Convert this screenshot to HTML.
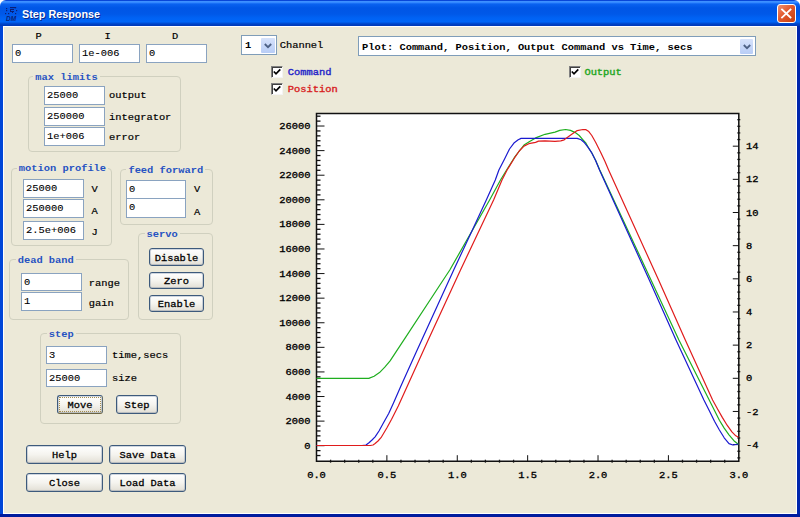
<!DOCTYPE html>
<html><head><meta charset="utf-8"><style>
*{box-sizing:border-box}
html,body{margin:0;padding:0;width:800px;height:517px;overflow:hidden;background:#fff}
body{position:relative;font-family:"Liberation Mono",monospace;font-weight:bold;font-size:10.4px;color:#000}
.a{position:absolute}
#title{left:0;top:0;width:800px;height:26px;border-radius:6px 6px 0 0;
 background:linear-gradient(#0846d8 0,#0846d8 1px,#3d90ff 1.5px,#3388ff 2.5px,#0a62f0 4px,#0056e6 8px,#0058e8 14px,#0062f4 18px,#0066f8 22px,#0050d8 23px,#003cbc 25px,#003cbc 26px)}
#frameL{left:0;top:26px;width:3px;height:491px;background:#0046d8}
#frameR{left:797px;top:26px;width:3px;height:491px;background:#0026ac}
#frameB{left:0;top:514px;width:800px;height:3px;background:#001c9e}
#client{left:3px;top:26px;width:794px;height:488px;background:#ece9d8;border:1px solid #fff}
#ttl{left:22px;top:8px;font-family:"Liberation Sans",sans-serif;font-weight:bold;font-size:10.8px;line-height:13px;color:#fff;text-shadow:1px 1px 0 #0a2a8a}
#close{left:777px;top:4px;width:19px;height:19px;border:1px solid #fff;border-radius:3px;background:linear-gradient(135deg,#f09070,#e25a2e 45%,#c8400e)}
.edit{position:absolute;background:#fff;border:1px solid #8aa3c0;padding-left:2px;font-weight:normal;color:#000;-webkit-text-stroke-width:0.1px;line-height:18px;white-space:pre}
.grp{position:absolute;border:1px solid #d0d0bf;border-radius:4px}
.gt{position:absolute;color:#2652c2;background:#ece9d8;padding:0 2px;line-height:12px;white-space:pre}
.lbl{position:absolute;white-space:pre;line-height:12px;font-weight:normal;-webkit-text-stroke-width:0.2px}
.btn{position:absolute;font-weight:normal;-webkit-text-stroke-width:0.3px;border:1px solid #3d5a7c;box-shadow:inset 0 0 0 1px rgba(120,140,165,.35);border-radius:3px;background:linear-gradient(#ffffff,#f5f4ef 50%,#e6e3da 90%,#d8d3c8);text-align:center;white-space:pre}
.cb{position:absolute;width:12px;height:12px;background:#fff;border-top:1px solid #808080;border-left:1px solid #808080;border-right:1px solid #f4f4f4;border-bottom:1px solid #f4f4f4;box-shadow:inset 1px 1px 0 #404040}
.combo{position:absolute;background:#fff;border:1px solid #7f9db9;white-space:pre;padding-left:3px}
.t{display:inline-block;transform:scaleY(.87);line-height:12px}
.cl{font-weight:normal;-webkit-text-stroke-width:0.35px}
.dd{position:absolute;background:linear-gradient(#d6e2fb,#b8cdf6);border-radius:1px}
</style></head><body>
<div id="title" class="a"></div>
<div id="frameL" class="a"></div><div id="frameR" class="a"></div><div id="frameB" class="a"></div>
<div id="client" class="a"></div>
<div id="ttl" class="a">Step Response</div>
<svg class="a" style="left:0;top:0" width="22" height="24"><g fill="#0a1f78">
<rect x="10" y="7" width="6" height="1.2"/><rect x="10" y="9" width="1" height="3"/><rect x="11" y="9" width="3" height="1"/><rect x="11" y="11" width="3" height="1"/>
<rect x="6" y="8" width="1.2" height="1.2"/><rect x="6" y="10" width="1.2" height="1.2"/><rect x="5" y="13" width="1.2" height="1.2"/><rect x="8" y="13" width="1.2" height="1.2"/>
<rect x="15" y="7" width="1.2" height="1.2"/><rect x="16" y="10" width="1.2" height="1.2"/><rect x="15" y="13" width="1.2" height="1.2"/><rect x="12" y="12" width="1" height="1"/>
</g><text x="6" y="20.5" font-family="Liberation Sans" font-weight="bold" font-style="italic" font-size="6.5" fill="#0a1f78">DM</text></svg>
<div id="close" class="a"></div><svg class="a" style="left:777px;top:4px" width="19" height="19"><path d="M5 5.5L13.5 13.5M13.5 5.5L5 13.5" stroke="#fff" stroke-width="1.8" stroke-linecap="square"/></svg>
<div class="lbl" style="left:8.5px;width:60px;text-align:center;top:30px"><span class="t">P</span></div>
<div class="lbl" style="left:77.6px;width:60px;text-align:center;top:30px"><span class="t">I</span></div>
<div class="lbl" style="left:145px;width:60px;text-align:center;top:30px"><span class="t">D</span></div>
<div class="edit" style="left:12px;top:44px;width:61px;height:19px;line-height:12px;padding-top:2px"><span class="t">0</span></div>
<div class="edit" style="left:79px;top:44px;width:61px;height:19px;line-height:12px;padding-top:2px"><span class="t">1e-006</span></div>
<div class="edit" style="left:146px;top:44px;width:61px;height:19px;line-height:12px;padding-top:2px"><span class="t">0</span></div>
<div class="grp" style="left:28px;top:76px;width:153px;height:76px"></div>
<div class="gt" style="left:33.3px;top:70.5px"><span class="t">max limits</span></div>
<div class="edit" style="left:44px;top:86px;width:61px;height:19px;line-height:12px;padding-top:2px"><span class="t">25000</span></div>
<div class="edit" style="left:44px;top:107px;width:61px;height:19px;line-height:12px;padding-top:2px"><span class="t">250000</span></div>
<div class="edit" style="left:44px;top:127px;width:61px;height:19px;line-height:12px;padding-top:2px"><span class="t">1e+006</span></div>
<div class="lbl" style="left:109px;top:89.4px"><span class="t">output</span></div>
<div class="lbl" style="left:109px;top:111px"><span class="t">integrator</span></div>
<div class="lbl" style="left:109px;top:131.2px"><span class="t">error</span></div>
<div class="grp" style="left:11px;top:168px;width:101px;height:78px"></div>
<div class="gt" style="left:16.8px;top:162px"><span class="t">motion profile</span></div>
<div class="edit" style="left:23px;top:179px;width:61px;height:19px;line-height:12px;padding-top:2px"><span class="t">25000</span></div>
<div class="edit" style="left:23px;top:199px;width:61px;height:19px;line-height:12px;padding-top:2px"><span class="t">250000</span></div>
<div class="edit" style="left:23px;top:221px;width:61px;height:19px;line-height:12px;padding-top:2px"><span class="t">2.5e+006</span></div>
<div class="lbl" style="left:91.4px;top:182.6px"><span class="t">V</span></div>
<div class="lbl" style="left:91.4px;top:205px"><span class="t">A</span></div>
<div class="lbl" style="left:91.4px;top:226px"><span class="t">J</span></div>
<div class="grp" style="left:120px;top:169px;width:93px;height:56px"></div>
<div class="gt" style="left:126.4px;top:164px"><span class="t">feed forward</span></div>
<div class="edit" style="left:126px;top:180px;width:60px;height:19px;line-height:12px;padding-top:2px"><span class="t">0</span></div>
<div class="edit" style="left:126px;top:198px;width:60px;height:20px;line-height:12px;padding-top:2px"><span class="t">0</span></div>
<div class="lbl" style="left:194px;top:182.6px"><span class="t">V</span></div>
<div class="lbl" style="left:194px;top:206px"><span class="t">A</span></div>
<div class="grp" style="left:138px;top:233px;width:75px;height:87px"></div>
<div class="gt" style="left:144.5px;top:227.8px"><span class="t">servo</span></div>
<div class="btn" style="left:149px;top:248px;width:55px;height:18px;line-height:18px;"><span class="t">Disable</span></div>
<div class="btn" style="left:149px;top:272px;width:55px;height:17px;line-height:17px;"><span class="t">Zero</span></div>
<div class="btn" style="left:149px;top:295px;width:55px;height:17px;line-height:17px;"><span class="t">Enable</span></div>
<div class="grp" style="left:9px;top:259px;width:120px;height:61px"></div>
<div class="gt" style="left:15.7px;top:253.5px"><span class="t">dead band</span></div>
<div class="edit" style="left:21px;top:273px;width:61px;height:18px;line-height:12px;padding-top:2px"><span class="t">0</span></div>
<div class="edit" style="left:21px;top:292px;width:61px;height:19px;line-height:12px;padding-top:2px"><span class="t">1</span></div>
<div class="lbl" style="left:88.7px;top:276.7px"><span class="t">range</span></div>
<div class="lbl" style="left:88.7px;top:296.7px"><span class="t">gain</span></div>
<div class="grp" style="left:40px;top:333px;width:141px;height:91px"></div>
<div class="gt" style="left:46.7px;top:328px"><span class="t">step</span></div>
<div class="edit" style="left:46px;top:346px;width:61px;height:18px;line-height:12px;padding-top:2px"><span class="t">3</span></div>
<div class="edit" style="left:46px;top:369px;width:61px;height:18px;line-height:12px;padding-top:2px"><span class="t">25000</span></div>
<div class="lbl" style="left:112px;top:349px"><span class="t">time,secs</span></div>
<div class="lbl" style="left:112px;top:372px"><span class="t">size</span></div>
<div class="btn" style="left:57px;top:395px;width:46px;height:19px;line-height:19px;border-bottom-color:#6b6440;border-right-color:#5d6a6a"><span class="t">Move</span></div>
<div class="a" style="left:59px;top:397px;width:42px;height:15px;border:1px dotted #a58d4e"></div>
<div class="btn" style="left:116px;top:395px;width:42px;height:19px;line-height:19px;"><span class="t">Step</span></div>
<div class="btn" style="left:26px;top:445px;width:77px;height:19px;line-height:19px;"><span class="t">Help</span></div>
<div class="btn" style="left:109px;top:445px;width:77px;height:19px;line-height:19px;"><span class="t">Save Data</span></div>
<div class="btn" style="left:26px;top:473px;width:77px;height:19px;line-height:19px;"><span class="t">Close</span></div>
<div class="btn" style="left:109px;top:473px;width:77px;height:19px;line-height:19px;"><span class="t">Load Data</span></div>
<div class="combo" style="left:241px;top:35px;width:36px;height:20px;line-height:19px"><span class="t">1</span></div>
<div class="dd" style="left:261px;top:37.8px;width:13.5px;height:15px"></div>
<svg class="a" style="left:261px;top:37.8px" width="14" height="15"><path d="M3.8 6L7 9.2L10.2 6" fill="none" stroke="#4d6185" stroke-width="1.8"/></svg>
<div class="lbl" style="left:279.7px;top:39.2px"><span class="t">Channel</span></div>
<div class="combo" style="left:358px;top:36px;width:398px;height:20px;line-height:20px"><span class="t">Plot: Command, Position, Output Command vs Time, secs</span></div>
<div class="dd" style="left:740px;top:39px;width:13px;height:15px"></div>
<svg class="a" style="left:740px;top:39px" width="14" height="15"><path d="M3.8 6L7 9.2L10.2 6" fill="none" stroke="#4d6185" stroke-width="1.8"/></svg>
<div class="cb" style="left:271px;top:66px"></div>
<svg class="a" style="left:271px;top:66px" width="12" height="12"><path d="M2.8 5.5L5 7.8L9.3 3.3" fill="none" stroke="#000" stroke-width="1.7"/></svg>
<div class="lbl" style="left:287.8px;top:65.7px;color:#2525c8;-webkit-text-stroke-width:0.4px"><span class="t">Command</span></div>
<div class="cb" style="left:271px;top:83px"></div>
<svg class="a" style="left:271px;top:83px" width="12" height="12"><path d="M2.8 5.5L5 7.8L9.3 3.3" fill="none" stroke="#000" stroke-width="1.7"/></svg>
<div class="lbl" style="left:287.8px;top:82.7px;color:#d82222;-webkit-text-stroke-width:0.4px"><span class="t">Position</span></div>
<div class="cb" style="left:568.5px;top:66px"></div>
<svg class="a" style="left:568.5px;top:66px" width="12" height="12"><path d="M2.8 5.5L5 7.8L9.3 3.3" fill="none" stroke="#000" stroke-width="1.7"/></svg>
<div class="lbl" style="left:584.4px;top:65.7px;color:#22a622;-webkit-text-stroke-width:0.4px"><span class="t">Output</span></div>
<svg class="a" style="left:0;top:0" width="800" height="517"><rect x="316.5" y="113.5" width="422.29999999999995" height="347.7" fill="#fff"/><line x1="316.5" y1="455.54" x2="320.5" y2="455.54" stroke="#111" stroke-width="1.3"/><line x1="316.5" y1="450.62" x2="320.5" y2="450.62" stroke="#111" stroke-width="1.3"/><line x1="316.5" y1="445.70" x2="324.5" y2="445.70" stroke="#111" stroke-width="1"/><line x1="316.5" y1="440.78" x2="320.5" y2="440.78" stroke="#111" stroke-width="1.3"/><line x1="316.5" y1="435.86" x2="320.5" y2="435.86" stroke="#111" stroke-width="1.3"/><line x1="316.5" y1="430.95" x2="320.5" y2="430.95" stroke="#111" stroke-width="1.3"/><line x1="316.5" y1="426.03" x2="320.5" y2="426.03" stroke="#111" stroke-width="1.3"/><line x1="316.5" y1="421.11" x2="324.5" y2="421.11" stroke="#111" stroke-width="1"/><line x1="316.5" y1="416.19" x2="320.5" y2="416.19" stroke="#111" stroke-width="1.3"/><line x1="316.5" y1="411.27" x2="320.5" y2="411.27" stroke="#111" stroke-width="1.3"/><line x1="316.5" y1="406.36" x2="320.5" y2="406.36" stroke="#111" stroke-width="1.3"/><line x1="316.5" y1="401.44" x2="320.5" y2="401.44" stroke="#111" stroke-width="1.3"/><line x1="316.5" y1="396.52" x2="324.5" y2="396.52" stroke="#111" stroke-width="1"/><line x1="316.5" y1="391.60" x2="320.5" y2="391.60" stroke="#111" stroke-width="1.3"/><line x1="316.5" y1="386.68" x2="320.5" y2="386.68" stroke="#111" stroke-width="1.3"/><line x1="316.5" y1="381.77" x2="320.5" y2="381.77" stroke="#111" stroke-width="1.3"/><line x1="316.5" y1="376.85" x2="320.5" y2="376.85" stroke="#111" stroke-width="1.3"/><line x1="316.5" y1="371.93" x2="324.5" y2="371.93" stroke="#111" stroke-width="1"/><line x1="316.5" y1="367.01" x2="320.5" y2="367.01" stroke="#111" stroke-width="1.3"/><line x1="316.5" y1="362.09" x2="320.5" y2="362.09" stroke="#111" stroke-width="1.3"/><line x1="316.5" y1="357.18" x2="320.5" y2="357.18" stroke="#111" stroke-width="1.3"/><line x1="316.5" y1="352.26" x2="320.5" y2="352.26" stroke="#111" stroke-width="1.3"/><line x1="316.5" y1="347.34" x2="324.5" y2="347.34" stroke="#111" stroke-width="1"/><line x1="316.5" y1="342.42" x2="320.5" y2="342.42" stroke="#111" stroke-width="1.3"/><line x1="316.5" y1="337.50" x2="320.5" y2="337.50" stroke="#111" stroke-width="1.3"/><line x1="316.5" y1="332.59" x2="320.5" y2="332.59" stroke="#111" stroke-width="1.3"/><line x1="316.5" y1="327.67" x2="320.5" y2="327.67" stroke="#111" stroke-width="1.3"/><line x1="316.5" y1="322.75" x2="324.5" y2="322.75" stroke="#111" stroke-width="1"/><line x1="316.5" y1="317.83" x2="320.5" y2="317.83" stroke="#111" stroke-width="1.3"/><line x1="316.5" y1="312.91" x2="320.5" y2="312.91" stroke="#111" stroke-width="1.3"/><line x1="316.5" y1="308.00" x2="320.5" y2="308.00" stroke="#111" stroke-width="1.3"/><line x1="316.5" y1="303.08" x2="320.5" y2="303.08" stroke="#111" stroke-width="1.3"/><line x1="316.5" y1="298.16" x2="324.5" y2="298.16" stroke="#111" stroke-width="1"/><line x1="316.5" y1="293.24" x2="320.5" y2="293.24" stroke="#111" stroke-width="1.3"/><line x1="316.5" y1="288.32" x2="320.5" y2="288.32" stroke="#111" stroke-width="1.3"/><line x1="316.5" y1="283.41" x2="320.5" y2="283.41" stroke="#111" stroke-width="1.3"/><line x1="316.5" y1="278.49" x2="320.5" y2="278.49" stroke="#111" stroke-width="1.3"/><line x1="316.5" y1="273.57" x2="324.5" y2="273.57" stroke="#111" stroke-width="1"/><line x1="316.5" y1="268.65" x2="320.5" y2="268.65" stroke="#111" stroke-width="1.3"/><line x1="316.5" y1="263.73" x2="320.5" y2="263.73" stroke="#111" stroke-width="1.3"/><line x1="316.5" y1="258.82" x2="320.5" y2="258.82" stroke="#111" stroke-width="1.3"/><line x1="316.5" y1="253.90" x2="320.5" y2="253.90" stroke="#111" stroke-width="1.3"/><line x1="316.5" y1="248.98" x2="324.5" y2="248.98" stroke="#111" stroke-width="1"/><line x1="316.5" y1="244.06" x2="320.5" y2="244.06" stroke="#111" stroke-width="1.3"/><line x1="316.5" y1="239.14" x2="320.5" y2="239.14" stroke="#111" stroke-width="1.3"/><line x1="316.5" y1="234.23" x2="320.5" y2="234.23" stroke="#111" stroke-width="1.3"/><line x1="316.5" y1="229.31" x2="320.5" y2="229.31" stroke="#111" stroke-width="1.3"/><line x1="316.5" y1="224.39" x2="324.5" y2="224.39" stroke="#111" stroke-width="1"/><line x1="316.5" y1="219.47" x2="320.5" y2="219.47" stroke="#111" stroke-width="1.3"/><line x1="316.5" y1="214.55" x2="320.5" y2="214.55" stroke="#111" stroke-width="1.3"/><line x1="316.5" y1="209.64" x2="320.5" y2="209.64" stroke="#111" stroke-width="1.3"/><line x1="316.5" y1="204.72" x2="320.5" y2="204.72" stroke="#111" stroke-width="1.3"/><line x1="316.5" y1="199.80" x2="324.5" y2="199.80" stroke="#111" stroke-width="1"/><line x1="316.5" y1="194.88" x2="320.5" y2="194.88" stroke="#111" stroke-width="1.3"/><line x1="316.5" y1="189.96" x2="320.5" y2="189.96" stroke="#111" stroke-width="1.3"/><line x1="316.5" y1="185.05" x2="320.5" y2="185.05" stroke="#111" stroke-width="1.3"/><line x1="316.5" y1="180.13" x2="320.5" y2="180.13" stroke="#111" stroke-width="1.3"/><line x1="316.5" y1="175.21" x2="324.5" y2="175.21" stroke="#111" stroke-width="1"/><line x1="316.5" y1="170.29" x2="320.5" y2="170.29" stroke="#111" stroke-width="1.3"/><line x1="316.5" y1="165.37" x2="320.5" y2="165.37" stroke="#111" stroke-width="1.3"/><line x1="316.5" y1="160.46" x2="320.5" y2="160.46" stroke="#111" stroke-width="1.3"/><line x1="316.5" y1="155.54" x2="320.5" y2="155.54" stroke="#111" stroke-width="1.3"/><line x1="316.5" y1="150.62" x2="324.5" y2="150.62" stroke="#111" stroke-width="1"/><line x1="316.5" y1="145.70" x2="320.5" y2="145.70" stroke="#111" stroke-width="1.3"/><line x1="316.5" y1="140.78" x2="320.5" y2="140.78" stroke="#111" stroke-width="1.3"/><line x1="316.5" y1="135.87" x2="320.5" y2="135.87" stroke="#111" stroke-width="1.3"/><line x1="316.5" y1="130.95" x2="320.5" y2="130.95" stroke="#111" stroke-width="1.3"/><line x1="316.5" y1="126.03" x2="324.5" y2="126.03" stroke="#111" stroke-width="1"/><line x1="316.5" y1="121.11" x2="320.5" y2="121.11" stroke="#111" stroke-width="1.3"/><line x1="316.5" y1="116.19" x2="320.5" y2="116.19" stroke="#111" stroke-width="1.3"/><line x1="737.3" y1="457.88" x2="740.3" y2="457.88" stroke="#222" stroke-width="1.3"/><line x1="737.3" y1="451.25" x2="740.3" y2="451.25" stroke="#222" stroke-width="1.3"/><line x1="732.8" y1="444.62" x2="738.8" y2="444.62" stroke="#111" stroke-width="1"/><line x1="737.3" y1="437.99" x2="740.3" y2="437.99" stroke="#222" stroke-width="1.3"/><line x1="737.3" y1="431.36" x2="740.3" y2="431.36" stroke="#222" stroke-width="1.3"/><line x1="737.3" y1="424.72" x2="740.3" y2="424.72" stroke="#222" stroke-width="1.3"/><line x1="737.3" y1="418.09" x2="740.3" y2="418.09" stroke="#222" stroke-width="1.3"/><line x1="732.8" y1="411.46" x2="738.8" y2="411.46" stroke="#111" stroke-width="1"/><line x1="737.3" y1="404.83" x2="740.3" y2="404.83" stroke="#222" stroke-width="1.3"/><line x1="737.3" y1="398.20" x2="740.3" y2="398.20" stroke="#222" stroke-width="1.3"/><line x1="737.3" y1="391.56" x2="740.3" y2="391.56" stroke="#222" stroke-width="1.3"/><line x1="737.3" y1="384.93" x2="740.3" y2="384.93" stroke="#222" stroke-width="1.3"/><line x1="732.8" y1="378.30" x2="738.8" y2="378.30" stroke="#111" stroke-width="1"/><line x1="737.3" y1="371.67" x2="740.3" y2="371.67" stroke="#222" stroke-width="1.3"/><line x1="737.3" y1="365.04" x2="740.3" y2="365.04" stroke="#222" stroke-width="1.3"/><line x1="737.3" y1="358.40" x2="740.3" y2="358.40" stroke="#222" stroke-width="1.3"/><line x1="737.3" y1="351.77" x2="740.3" y2="351.77" stroke="#222" stroke-width="1.3"/><line x1="732.8" y1="345.14" x2="738.8" y2="345.14" stroke="#111" stroke-width="1"/><line x1="737.3" y1="338.51" x2="740.3" y2="338.51" stroke="#222" stroke-width="1.3"/><line x1="737.3" y1="331.88" x2="740.3" y2="331.88" stroke="#222" stroke-width="1.3"/><line x1="737.3" y1="325.24" x2="740.3" y2="325.24" stroke="#222" stroke-width="1.3"/><line x1="737.3" y1="318.61" x2="740.3" y2="318.61" stroke="#222" stroke-width="1.3"/><line x1="732.8" y1="311.98" x2="738.8" y2="311.98" stroke="#111" stroke-width="1"/><line x1="737.3" y1="305.35" x2="740.3" y2="305.35" stroke="#222" stroke-width="1.3"/><line x1="737.3" y1="298.72" x2="740.3" y2="298.72" stroke="#222" stroke-width="1.3"/><line x1="737.3" y1="292.08" x2="740.3" y2="292.08" stroke="#222" stroke-width="1.3"/><line x1="737.3" y1="285.45" x2="740.3" y2="285.45" stroke="#222" stroke-width="1.3"/><line x1="732.8" y1="278.82" x2="738.8" y2="278.82" stroke="#111" stroke-width="1"/><line x1="737.3" y1="272.19" x2="740.3" y2="272.19" stroke="#222" stroke-width="1.3"/><line x1="737.3" y1="265.56" x2="740.3" y2="265.56" stroke="#222" stroke-width="1.3"/><line x1="737.3" y1="258.92" x2="740.3" y2="258.92" stroke="#222" stroke-width="1.3"/><line x1="737.3" y1="252.29" x2="740.3" y2="252.29" stroke="#222" stroke-width="1.3"/><line x1="732.8" y1="245.66" x2="738.8" y2="245.66" stroke="#111" stroke-width="1"/><line x1="737.3" y1="239.03" x2="740.3" y2="239.03" stroke="#222" stroke-width="1.3"/><line x1="737.3" y1="232.40" x2="740.3" y2="232.40" stroke="#222" stroke-width="1.3"/><line x1="737.3" y1="225.76" x2="740.3" y2="225.76" stroke="#222" stroke-width="1.3"/><line x1="737.3" y1="219.13" x2="740.3" y2="219.13" stroke="#222" stroke-width="1.3"/><line x1="732.8" y1="212.50" x2="738.8" y2="212.50" stroke="#111" stroke-width="1"/><line x1="737.3" y1="205.87" x2="740.3" y2="205.87" stroke="#222" stroke-width="1.3"/><line x1="737.3" y1="199.24" x2="740.3" y2="199.24" stroke="#222" stroke-width="1.3"/><line x1="737.3" y1="192.60" x2="740.3" y2="192.60" stroke="#222" stroke-width="1.3"/><line x1="737.3" y1="185.97" x2="740.3" y2="185.97" stroke="#222" stroke-width="1.3"/><line x1="732.8" y1="179.34" x2="738.8" y2="179.34" stroke="#111" stroke-width="1"/><line x1="737.3" y1="172.71" x2="740.3" y2="172.71" stroke="#222" stroke-width="1.3"/><line x1="737.3" y1="166.08" x2="740.3" y2="166.08" stroke="#222" stroke-width="1.3"/><line x1="737.3" y1="159.44" x2="740.3" y2="159.44" stroke="#222" stroke-width="1.3"/><line x1="737.3" y1="152.81" x2="740.3" y2="152.81" stroke="#222" stroke-width="1.3"/><line x1="732.8" y1="146.18" x2="738.8" y2="146.18" stroke="#111" stroke-width="1"/><line x1="737.3" y1="139.55" x2="740.3" y2="139.55" stroke="#222" stroke-width="1.3"/><line x1="737.3" y1="132.92" x2="740.3" y2="132.92" stroke="#222" stroke-width="1.3"/><line x1="737.3" y1="126.28" x2="740.3" y2="126.28" stroke="#222" stroke-width="1.3"/><line x1="737.3" y1="119.65" x2="740.3" y2="119.65" stroke="#222" stroke-width="1.3"/><line x1="330.58" y1="459.7" x2="330.58" y2="462.7" stroke="#222" stroke-width="1.3"/><line x1="344.65" y1="459.7" x2="344.65" y2="462.7" stroke="#222" stroke-width="1.3"/><line x1="358.73" y1="459.7" x2="358.73" y2="462.7" stroke="#222" stroke-width="1.3"/><line x1="372.81" y1="459.7" x2="372.81" y2="462.7" stroke="#222" stroke-width="1.3"/><line x1="386.88" y1="461.2" x2="386.88" y2="455.2" stroke="#111" stroke-width="1"/><line x1="400.96" y1="459.7" x2="400.96" y2="462.7" stroke="#222" stroke-width="1.3"/><line x1="415.04" y1="459.7" x2="415.04" y2="462.7" stroke="#222" stroke-width="1.3"/><line x1="429.11" y1="459.7" x2="429.11" y2="462.7" stroke="#222" stroke-width="1.3"/><line x1="443.19" y1="459.7" x2="443.19" y2="462.7" stroke="#222" stroke-width="1.3"/><line x1="457.27" y1="461.2" x2="457.27" y2="455.2" stroke="#111" stroke-width="1"/><line x1="471.34" y1="459.7" x2="471.34" y2="462.7" stroke="#222" stroke-width="1.3"/><line x1="485.42" y1="459.7" x2="485.42" y2="462.7" stroke="#222" stroke-width="1.3"/><line x1="499.50" y1="459.7" x2="499.50" y2="462.7" stroke="#222" stroke-width="1.3"/><line x1="513.57" y1="459.7" x2="513.57" y2="462.7" stroke="#222" stroke-width="1.3"/><line x1="527.65" y1="461.2" x2="527.65" y2="455.2" stroke="#111" stroke-width="1"/><line x1="541.73" y1="459.7" x2="541.73" y2="462.7" stroke="#222" stroke-width="1.3"/><line x1="555.80" y1="459.7" x2="555.80" y2="462.7" stroke="#222" stroke-width="1.3"/><line x1="569.88" y1="459.7" x2="569.88" y2="462.7" stroke="#222" stroke-width="1.3"/><line x1="583.96" y1="459.7" x2="583.96" y2="462.7" stroke="#222" stroke-width="1.3"/><line x1="598.03" y1="461.2" x2="598.03" y2="455.2" stroke="#111" stroke-width="1"/><line x1="612.11" y1="459.7" x2="612.11" y2="462.7" stroke="#222" stroke-width="1.3"/><line x1="626.19" y1="459.7" x2="626.19" y2="462.7" stroke="#222" stroke-width="1.3"/><line x1="640.26" y1="459.7" x2="640.26" y2="462.7" stroke="#222" stroke-width="1.3"/><line x1="654.34" y1="459.7" x2="654.34" y2="462.7" stroke="#222" stroke-width="1.3"/><line x1="668.42" y1="461.2" x2="668.42" y2="455.2" stroke="#111" stroke-width="1"/><line x1="682.49" y1="459.7" x2="682.49" y2="462.7" stroke="#222" stroke-width="1.3"/><line x1="696.57" y1="459.7" x2="696.57" y2="462.7" stroke="#222" stroke-width="1.3"/><line x1="710.65" y1="459.7" x2="710.65" y2="462.7" stroke="#222" stroke-width="1.3"/><line x1="724.72" y1="459.7" x2="724.72" y2="462.7" stroke="#222" stroke-width="1.3"/><path d="M316.5 113.5H738.8V461.2H316.5Z" fill="none" stroke="#111" stroke-width="1.5"/><path d="M316.5 378.4 L368.8 378.4 L374.1 376.3 L379.5 372.6 L384.8 367.2 L390.1 360.9 L394.7 353.9 L400.3 345.4 L405.9 336.9 L443.2 280.0 L449.8 270.0 L489.6 200.0 L500.5 180.0 L506.6 170.0 L514.3 157.7 L520.1 150.0 L524.0 145.1 L528.8 142.0 L535.6 137.9 L545.0 134.3 L555.0 132.1 L559.8 130.4 L565.6 129.5 L570.5 130.4 L575.3 132.6 L579.2 135.5 L583.0 139.8 L586.0 143.2 L588.2 147.3 L592.0 153.2 L595.8 160.8 L599.8 170.0 L651.0 280.0 L678.9 340.0 L709.2 400.0 L714.5 410.6 L719.4 420.3 L724.2 428.1 L729.0 434.8 L733.9 440.7 L738.5 444.5" fill="none" stroke="#1fae1f" stroke-width="1.2" stroke-linejoin="round"/><path d="M316.5 445.5 L362.0 445.5 L366.0 445.0 L369.3 442.5 L372.0 440.0 L375.1 436.8 L379.0 431.0 L383.8 422.2 L388.7 413.5 L393.5 402.9 L400.7 386.5 L415.8 352.9 L453.7 270.0 L472.4 230.0 L486.3 200.0 L495.3 180.0 L498.9 170.0 L504.7 158.7 L509.5 149.0 L514.3 142.7 L518.2 139.8 L521.1 138.4 L577.2 138.4 L581.1 139.8 L584.0 142.2 L587.9 147.1 L591.8 152.9 L595.6 160.6 L599.5 170.0 L649.3 280.0 L676.0 340.0 L703.9 400.0 L709.7 411.6 L714.5 421.3 L719.4 430.0 L724.2 437.8 L729.0 443.6 L732.9 445.0 L735.8 444.5 L738.5 444.0" fill="none" stroke="#1a1ad0" stroke-width="1.2" stroke-linejoin="round"/><path d="M316.5 445.5 L370.3 445.5 L373.0 445.0 L375.1 443.5 L378.0 441.0 L381.0 437.7 L386.8 428.0 L391.6 419.3 L398.4 405.8 L428.2 340.0 L460.5 270.0 L493.6 200.0 L502.0 180.0 L507.1 170.0 L514.3 158.2 L519.2 151.0 L524.0 146.1 L528.8 143.7 L535.6 142.4 L538.5 141.1 L545.0 140.8 L555.0 141.3 L560.8 140.8 L564.2 139.8 L566.6 137.9 L571.4 134.5 L577.2 130.6 L583.0 129.5 L586.0 129.7 L588.8 131.6 L591.8 135.5 L595.6 142.2 L600.5 151.9 L605.0 161.6 L608.6 170.0 L658.6 280.0 L685.3 340.0 L712.6 400.0 L717.4 408.7 L722.3 417.4 L727.1 425.2 L731.9 431.9 L735.8 435.8 L738.5 437.3" fill="none" stroke="#e01c1c" stroke-width="1.2" stroke-linejoin="round"/></svg>
<div class="lbl cl" style="left:250px;width:60.5px;text-align:right;top:439.7px"><span class="t">0</span></div>
<div class="lbl cl" style="left:250px;width:60.5px;text-align:right;top:415.1px"><span class="t">2000</span></div>
<div class="lbl cl" style="left:250px;width:60.5px;text-align:right;top:390.5px"><span class="t">4000</span></div>
<div class="lbl cl" style="left:250px;width:60.5px;text-align:right;top:365.9px"><span class="t">6000</span></div>
<div class="lbl cl" style="left:250px;width:60.5px;text-align:right;top:341.3px"><span class="t">8000</span></div>
<div class="lbl cl" style="left:250px;width:60.5px;text-align:right;top:316.8px"><span class="t">10000</span></div>
<div class="lbl cl" style="left:250px;width:60.5px;text-align:right;top:292.2px"><span class="t">12000</span></div>
<div class="lbl cl" style="left:250px;width:60.5px;text-align:right;top:267.6px"><span class="t">14000</span></div>
<div class="lbl cl" style="left:250px;width:60.5px;text-align:right;top:243.0px"><span class="t">16000</span></div>
<div class="lbl cl" style="left:250px;width:60.5px;text-align:right;top:218.4px"><span class="t">18000</span></div>
<div class="lbl cl" style="left:250px;width:60.5px;text-align:right;top:193.8px"><span class="t">20000</span></div>
<div class="lbl cl" style="left:250px;width:60.5px;text-align:right;top:169.2px"><span class="t">22000</span></div>
<div class="lbl cl" style="left:250px;width:60.5px;text-align:right;top:144.6px"><span class="t">24000</span></div>
<div class="lbl cl" style="left:250px;width:60.5px;text-align:right;top:120.0px"><span class="t">26000</span></div>
<div class="lbl cl" style="left:746px;top:438.6px"><span class="t">-4</span></div>
<div class="lbl cl" style="left:746px;top:405.5px"><span class="t">-2</span></div>
<div class="lbl cl" style="left:746px;top:372.3px"><span class="t">0</span></div>
<div class="lbl cl" style="left:746px;top:339.1px"><span class="t">2</span></div>
<div class="lbl cl" style="left:746px;top:306.0px"><span class="t">4</span></div>
<div class="lbl cl" style="left:746px;top:272.8px"><span class="t">6</span></div>
<div class="lbl cl" style="left:746px;top:239.7px"><span class="t">8</span></div>
<div class="lbl cl" style="left:746px;top:206.5px"><span class="t">10</span></div>
<div class="lbl cl" style="left:746px;top:173.3px"><span class="t">12</span></div>
<div class="lbl cl" style="left:746px;top:140.2px"><span class="t">14</span></div>
<div class="lbl cl" style="left:286.5px;width:60px;text-align:center;top:469px"><span class="t">0.0</span></div>
<div class="lbl cl" style="left:356.9px;width:60px;text-align:center;top:469px"><span class="t">0.5</span></div>
<div class="lbl cl" style="left:427.3px;width:60px;text-align:center;top:469px"><span class="t">1.0</span></div>
<div class="lbl cl" style="left:497.6px;width:60px;text-align:center;top:469px"><span class="t">1.5</span></div>
<div class="lbl cl" style="left:568.0px;width:60px;text-align:center;top:469px"><span class="t">2.0</span></div>
<div class="lbl cl" style="left:638.4px;width:60px;text-align:center;top:469px"><span class="t">2.5</span></div>
<div class="lbl cl" style="left:708.8px;width:60px;text-align:center;top:469px"><span class="t">3.0</span></div>
</body></html>
